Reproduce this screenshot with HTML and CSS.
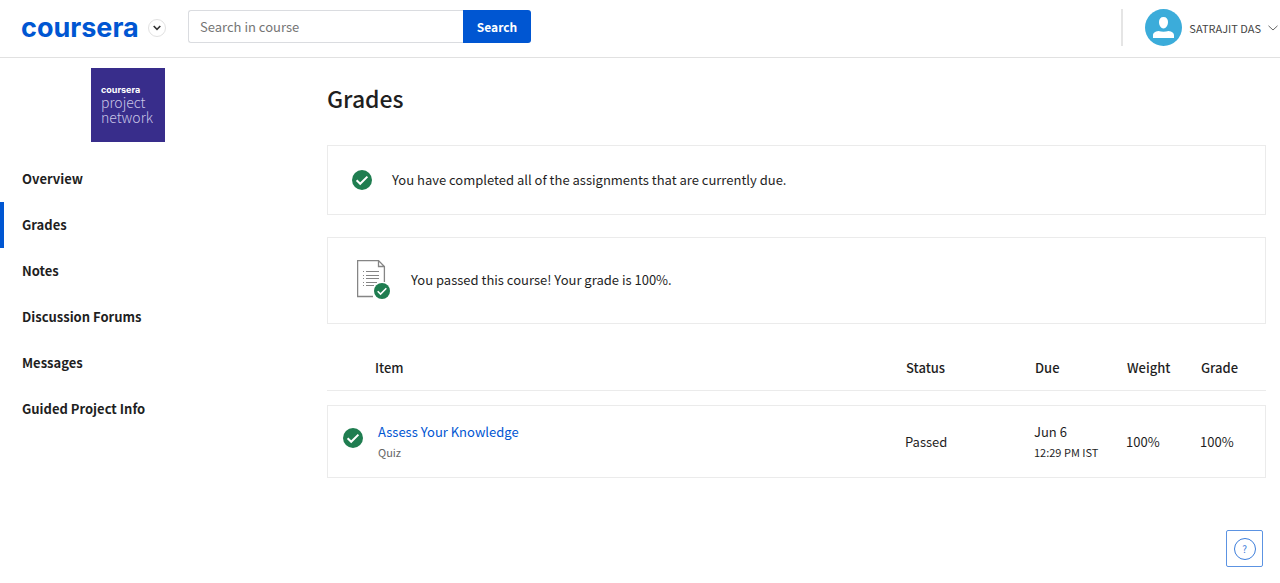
FILE: index.html
```html
<!DOCTYPE html>
<html lang="en">
<head>
<meta charset="utf-8">
<meta name="viewport" content="width=device-width, initial-scale=1">
<title>Grades | Coursera</title>
<link rel="stylesheet" href="styles.css">
</head>
<body>
<svg class="symbols" aria-hidden="true">
  <symbol id="check" viewBox="0 0 20 20">
    <circle cx="10" cy="10" r="10" fill="#1f7d50"/>
    <path d="M4.6 10.3 L8.2 13.8 L15.4 6.6" fill="none" stroke="#fff" stroke-width="2"/>
  </symbol>
</svg>
<header class="topbar">
  <a class="logo" href="#">coursera</a>
  <button class="explore" type="button" aria-label="Open menu">
    <svg width="8" height="6" viewBox="0 0 8 6"><path d="M0.7 1 L4 4.3 L7.3 1" fill="none" stroke="#333" stroke-width="1.6"/></svg>
  </button>
  <form class="search">
    <input class="search-input" type="text" placeholder="Search in course" aria-label="Search in course">
    <button class="search-button" type="button">Search</button>
  </form>
  <button class="account" type="button">
    <svg class="avatar" width="37" height="37" viewBox="0 0 37 37" aria-hidden="true">
      <circle cx="18.5" cy="18.5" r="18.5" fill="#3bacda"/>
      <path d="M18.5 8 C21.5 8 23 10 23 13 C23 16.5 21 19.4 18.5 19.4 C16 19.4 14 16.5 14 13 C14 10 15.5 8 18.5 8 Z M8 29 V26.5 C8 23.5 10 22.8 13.5 22 Q18.5 23.6 23.5 22 C27 22.8 29 23.5 29 26.5 V29 Z" fill="#fff"/>
    </svg>
    <span>SATRAJIT DAS</span>
    <svg width="10" height="6" viewBox="0 0 10 6" aria-hidden="true"><path d="M0.5 0.8 L5 5 L9.5 0.8" fill="none" stroke="#666" stroke-width="1"/></svg>
  </button>
</header>
<div class="layout">
  <aside class="sidebar">
    <a class="partner" href="#"><span class="partner-brand">coursera</span><span class="partner-name">project</span><span class="partner-name">network</span></a>
    <nav class="nav">
      <a class="nav-item" href="#">Overview</a>
      <a class="nav-item active" href="#" aria-current="page">Grades</a>
      <a class="nav-item" href="#">Notes</a>
      <a class="nav-item" href="#">Discussion Forums</a>
      <a class="nav-item" href="#">Messages</a>
      <a class="nav-item" href="#">Guided Project Info</a>
    </nav>
  </aside>
  <main class="content">
    <h1 class="title">Grades</h1>
    <section class="notice">
      <svg class="check" aria-hidden="true"><use href="#check"/></svg>
      <p>You have completed all of the assignments that are currently due.</p>
    </section>
    <section class="notice passed">
      <svg class="report" width="34" height="40" viewBox="0 0 34 40" aria-hidden="true">
        <path d="M16 36.5 H0.6 V0.6 H21.5 L27.4 6.5 V22 M21.5 0.6 V6.5 H27.4" fill="none" stroke="#858585" stroke-width="1.3"/>
        <path d="M9 11.5 H22 M9 15.5 H22 M9 18.5 H22 M9 22.5 H20 M9 25.5 H17" stroke="#858585"/>
        <path d="M6 11.5 H7 M6 15.5 H7 M6 18.5 H7 M6 22.5 H7 M6 25.5 H7" stroke="#858585"/>
        <circle cx="25" cy="31" r="9" fill="#fff"/>
        <use href="#check" x="17" y="23" width="16" height="16"/>
      </svg>
      <p>You passed this course! Your grade is 100%.</p>
    </section>
    <table class="grades">
      <thead>
        <tr><th class="col-item" scope="col">Item</th><th class="col-status" scope="col">Status</th><th class="col-due" scope="col">Due</th><th class="col-weight" scope="col">Weight</th><th class="col-grade" scope="col">Grade</th></tr>
      </thead>
      <tbody>
        <tr>
          <td>
            <div class="item">
              <svg class="check" aria-hidden="true"><use href="#check"/></svg>
              <div><a class="item-link" href="#">Assess Your Knowledge</a><div class="item-type">Quiz</div></div>
            </div>
          </td>
          <td>Passed</td>
          <td>Jun 6<div class="time">12:29 PM IST</div></td>
          <td>100%</td>
          <td>100%</td>
        </tr>
      </tbody>
    </table>
  </main>
</div>
<button class="help" type="button" aria-label="Help"><span class="help-mark">?</span></button>
</body>
</html>
```

FILE: styles.css
```css
* { box-sizing: border-box; }
body {
  margin: 0;
  background: #fff;
  color: #1f1f1f;
  font-family: "Noto Sans CJK SC", "Noto Sans", sans-serif;
  font-size: 13px;
  line-height: 20px;
}
a { color: inherit; text-decoration: none; }
button, input { font: inherit; }
p { margin: 0; }
.symbols { position: absolute; width: 0; height: 0; }
.check { flex: none; width: 20px; height: 20px; }

.topbar {
  display: flex;
  align-items: center;
  height: 58px;
  padding: 0 2px 2px 21px;
  border-bottom: 1px solid #e1e1e1;
}
.logo {
  width: 127px;
  color: #0056d2;
  font-family: Inter, sans-serif;
  font-size: 27px;
  font-weight: 700;
  line-height: 32px;
}
.explore {
  display: flex;
  align-items: center;
  justify-content: center;
  width: 18px;
  height: 18px;
  padding: 0;
  background: #fff;
  border: 1px solid #e1e1e1;
  border-radius: 50%;
}
.search { display: flex; margin: 0 0 2px 22px; }
.search-input {
  width: 275px;
  height: 33px;
  padding: 0 11px;
  border: 1px solid #dadce0;
  border-right: 0;
  border-radius: 3px 0 0 3px;
  color: #1f1f1f;
}
.search-input::placeholder { color: #757575; opacity: 1; }
.search-button {
  width: 68px;
  padding: 0;
  background: #0056d2;
  border: 0;
  border-radius: 0 3px 3px 0;
  color: #fff;
  font-size: 12px;
  font-weight: 700;
}
.account {
  display: flex;
  align-items: center;
  gap: 7px;
  height: 37px;
  margin-left: auto;
  padding: 0 0 0 22px;
  background: none;
  border: 0;
  border-left: 2px solid #e5e5e5;
  color: #444;
  font-size: 11px;
}

.layout { display: flex; }
.sidebar { flex: none; width: 256px; }
.partner {
  display: block;
  width: 74px;
  height: 74px;
  margin: 10px auto 14px;
  padding: 16px 0 0 10px;
  background: #382d8b;
  color: #c9c5e6;
}
.partner-brand {
  display: block;
  color: #fff;
  font-family: Inter, sans-serif;
  font-size: 9px;
  font-weight: 700;
  line-height: 11px;
}
.partner-name { display: block; font-size: 14px; font-weight: 300; line-height: 15px; }
.nav-item {
  display: block;
  padding: 13px 18px;
  border-left: 4px solid transparent;
  font-weight: 700;
}
.nav-item.active { border-left-color: #0056d2; }

.content { flex: 1; min-width: 0; padding: 24px 14px 0 71px; }
.title { margin: 0 0 31px; font-size: 23px; font-weight: 500; line-height: 32px; }
.notice {
  display: flex;
  align-items: center;
  gap: 20px;
  min-height: 70px;
  margin-bottom: 22px;
  padding: 0 24px;
  border: 1px solid #ebebeb;
}
.passed { min-height: 87px; padding: 0 29px 2px; }
.grades { width: 100%; border-collapse: separate; border-spacing: 0; }
.grades th {
  height: 45px;
  padding: 0 0 0 1px;
  border-bottom: 1px solid #ebebeb;
  font-weight: 500;
  text-align: left;
}
.grades .col-item { padding-left: 48px; }
.col-status { width: 129px; }
.col-due { width: 92px; }
.col-weight { width: 74px; }
.col-grade { width: 66px; }
.grades tbody::before { content: ""; display: block; height: 14px; }
.grades td {
  height: 73px;
  padding: 0;
  border: solid #ebebeb;
  border-width: 1px 0;
}
.grades td:first-child { border-left-width: 1px; }
.grades td:last-child { border-right-width: 1px; }
.item { display: flex; gap: 15px; padding-left: 15px; }
.item .check { margin-top: 6px; }
.item-link { color: #0056d2; }
.item-type { color: #666; font-size: 11px; }
.time { font-size: 11px; }

.help {
  position: fixed;
  right: 17px;
  bottom: 16px;
  display: grid;
  place-items: center;
  width: 37px;
  height: 37px;
  padding: 0;
  background: #fff;
  border: 1px solid #5c93e2;
  border-radius: 2px;
  color: #3d7edb;
}
.help-mark {
  width: 22px;
  height: 22px;
  border: 1px solid #3d7edb;
  border-radius: 50%;
  font-size: 10px;
  line-height: 20px;
}
```
